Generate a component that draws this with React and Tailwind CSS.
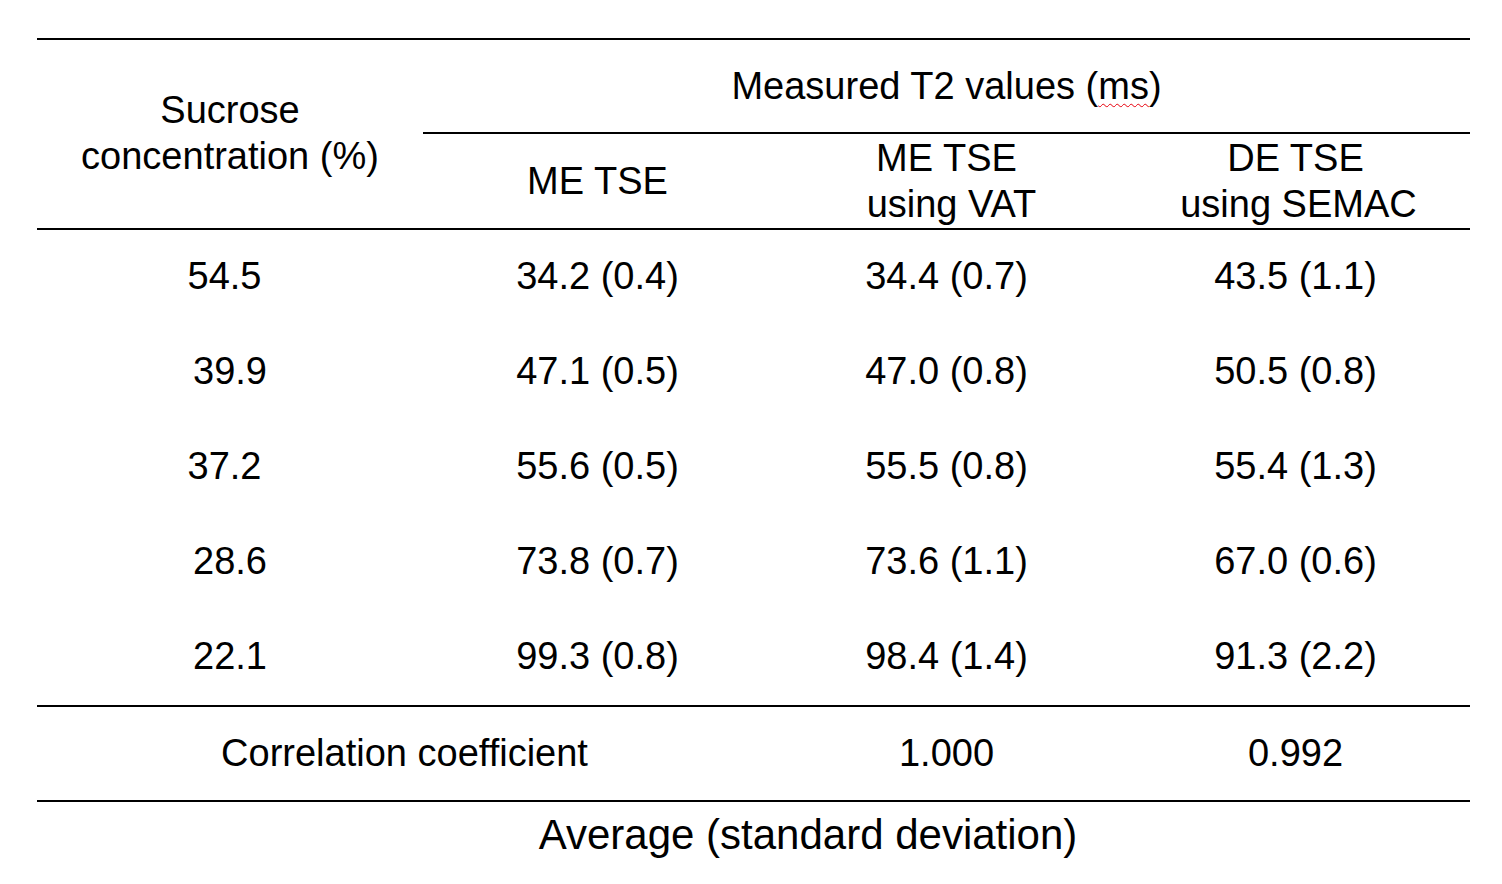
const rows = [
  { conc: "54.5", shift: true, me: "34.2 (0.4)", vat: "34.4 (0.7)", semac: "43.5 (1.1)" },
  { conc: "39.9", shift: false, me: "47.1 (0.5)", vat: "47.0 (0.8)", semac: "50.5 (0.8)" },
  { conc: "37.2", shift: true, me: "55.6 (0.5)", vat: "55.5 (0.8)", semac: "55.4 (1.3)" },
  { conc: "28.6", shift: false, me: "73.8 (0.7)", vat: "73.6 (1.1)", semac: "67.0 (0.6)" },
  { conc: "22.1", shift: false, me: "99.3 (0.8)", vat: "98.4 (1.4)", semac: "91.3 (2.2)" },
];

function Cell({ children, className = "" }) {
  return (
    <div className={`flex items-center justify-center text-center ${className}`}>
      {children}
    </div>
  );
}

export default function App() {
  return (
    <div className="w-full h-[884px] bg-white text-black font-['Liberation_Sans',Arial,sans-serif] text-[38px] leading-[46px] pt-[38px] pl-[37px]">
      <div className="w-[1433px]">
        {/* Header */}
        <div className="flex border-t-2 border-b-2 border-black h-[192px]">
          <Cell className="w-[386px] pb-[2px]">
            <span>
              Sucrose
              <br />
              concentration (%)
            </span>
          </Cell>
          <div className="flex-1 flex flex-col">
            <Cell className="h-[94px] border-b-2 border-black pb-[1px]">
              <span>
                Measured T2 values (
                <span className="underline decoration-wavy decoration-red-600 decoration-1 underline-offset-[4px]">
                  ms
                </span>
                )
              </span>
            </Cell>
            <div className="flex flex-1">
              <Cell className="w-[349px]">ME TSE</Cell>
              <Cell className="w-[349px]">
                <span>
                  ME TSE
                  <br />
                  <span className="pl-[10px]">using VAT</span>
                </span>
              </Cell>
              <Cell className="w-[349px]">
                <span>
                  DE TSE
                  <br />
                  <span className="pl-[6px]">using SEMAC</span>
                </span>
              </Cell>
            </div>
          </div>
        </div>

        {/* Data rows */}
        <div className="border-b-2 border-black">
          {rows.map((r) => (
            <div key={r.conc} className="flex h-[95px] pb-[3px]">
              <Cell className={`w-[386px] ${r.shift ? "pr-[11px]" : ""}`}>{r.conc}</Cell>
              <Cell className="w-[349px]">{r.me}</Cell>
              <Cell className="w-[349px]">{r.vat}</Cell>
              <Cell className="w-[349px]">{r.semac}</Cell>
            </div>
          ))}
        </div>

        {/* Correlation */}
        <div className="flex h-[95px] border-b-2 border-black pb-[2px]">
          <Cell className="w-[735px]">Correlation coefficient</Cell>
          <Cell className="w-[349px]">1.000</Cell>
          <Cell className="w-[349px]">0.992</Cell>
        </div>

        <div className="pl-[109px] text-center pt-[10px] text-[42px]">Average (standard deviation)</div>
      </div>
    </div>
  );
}
